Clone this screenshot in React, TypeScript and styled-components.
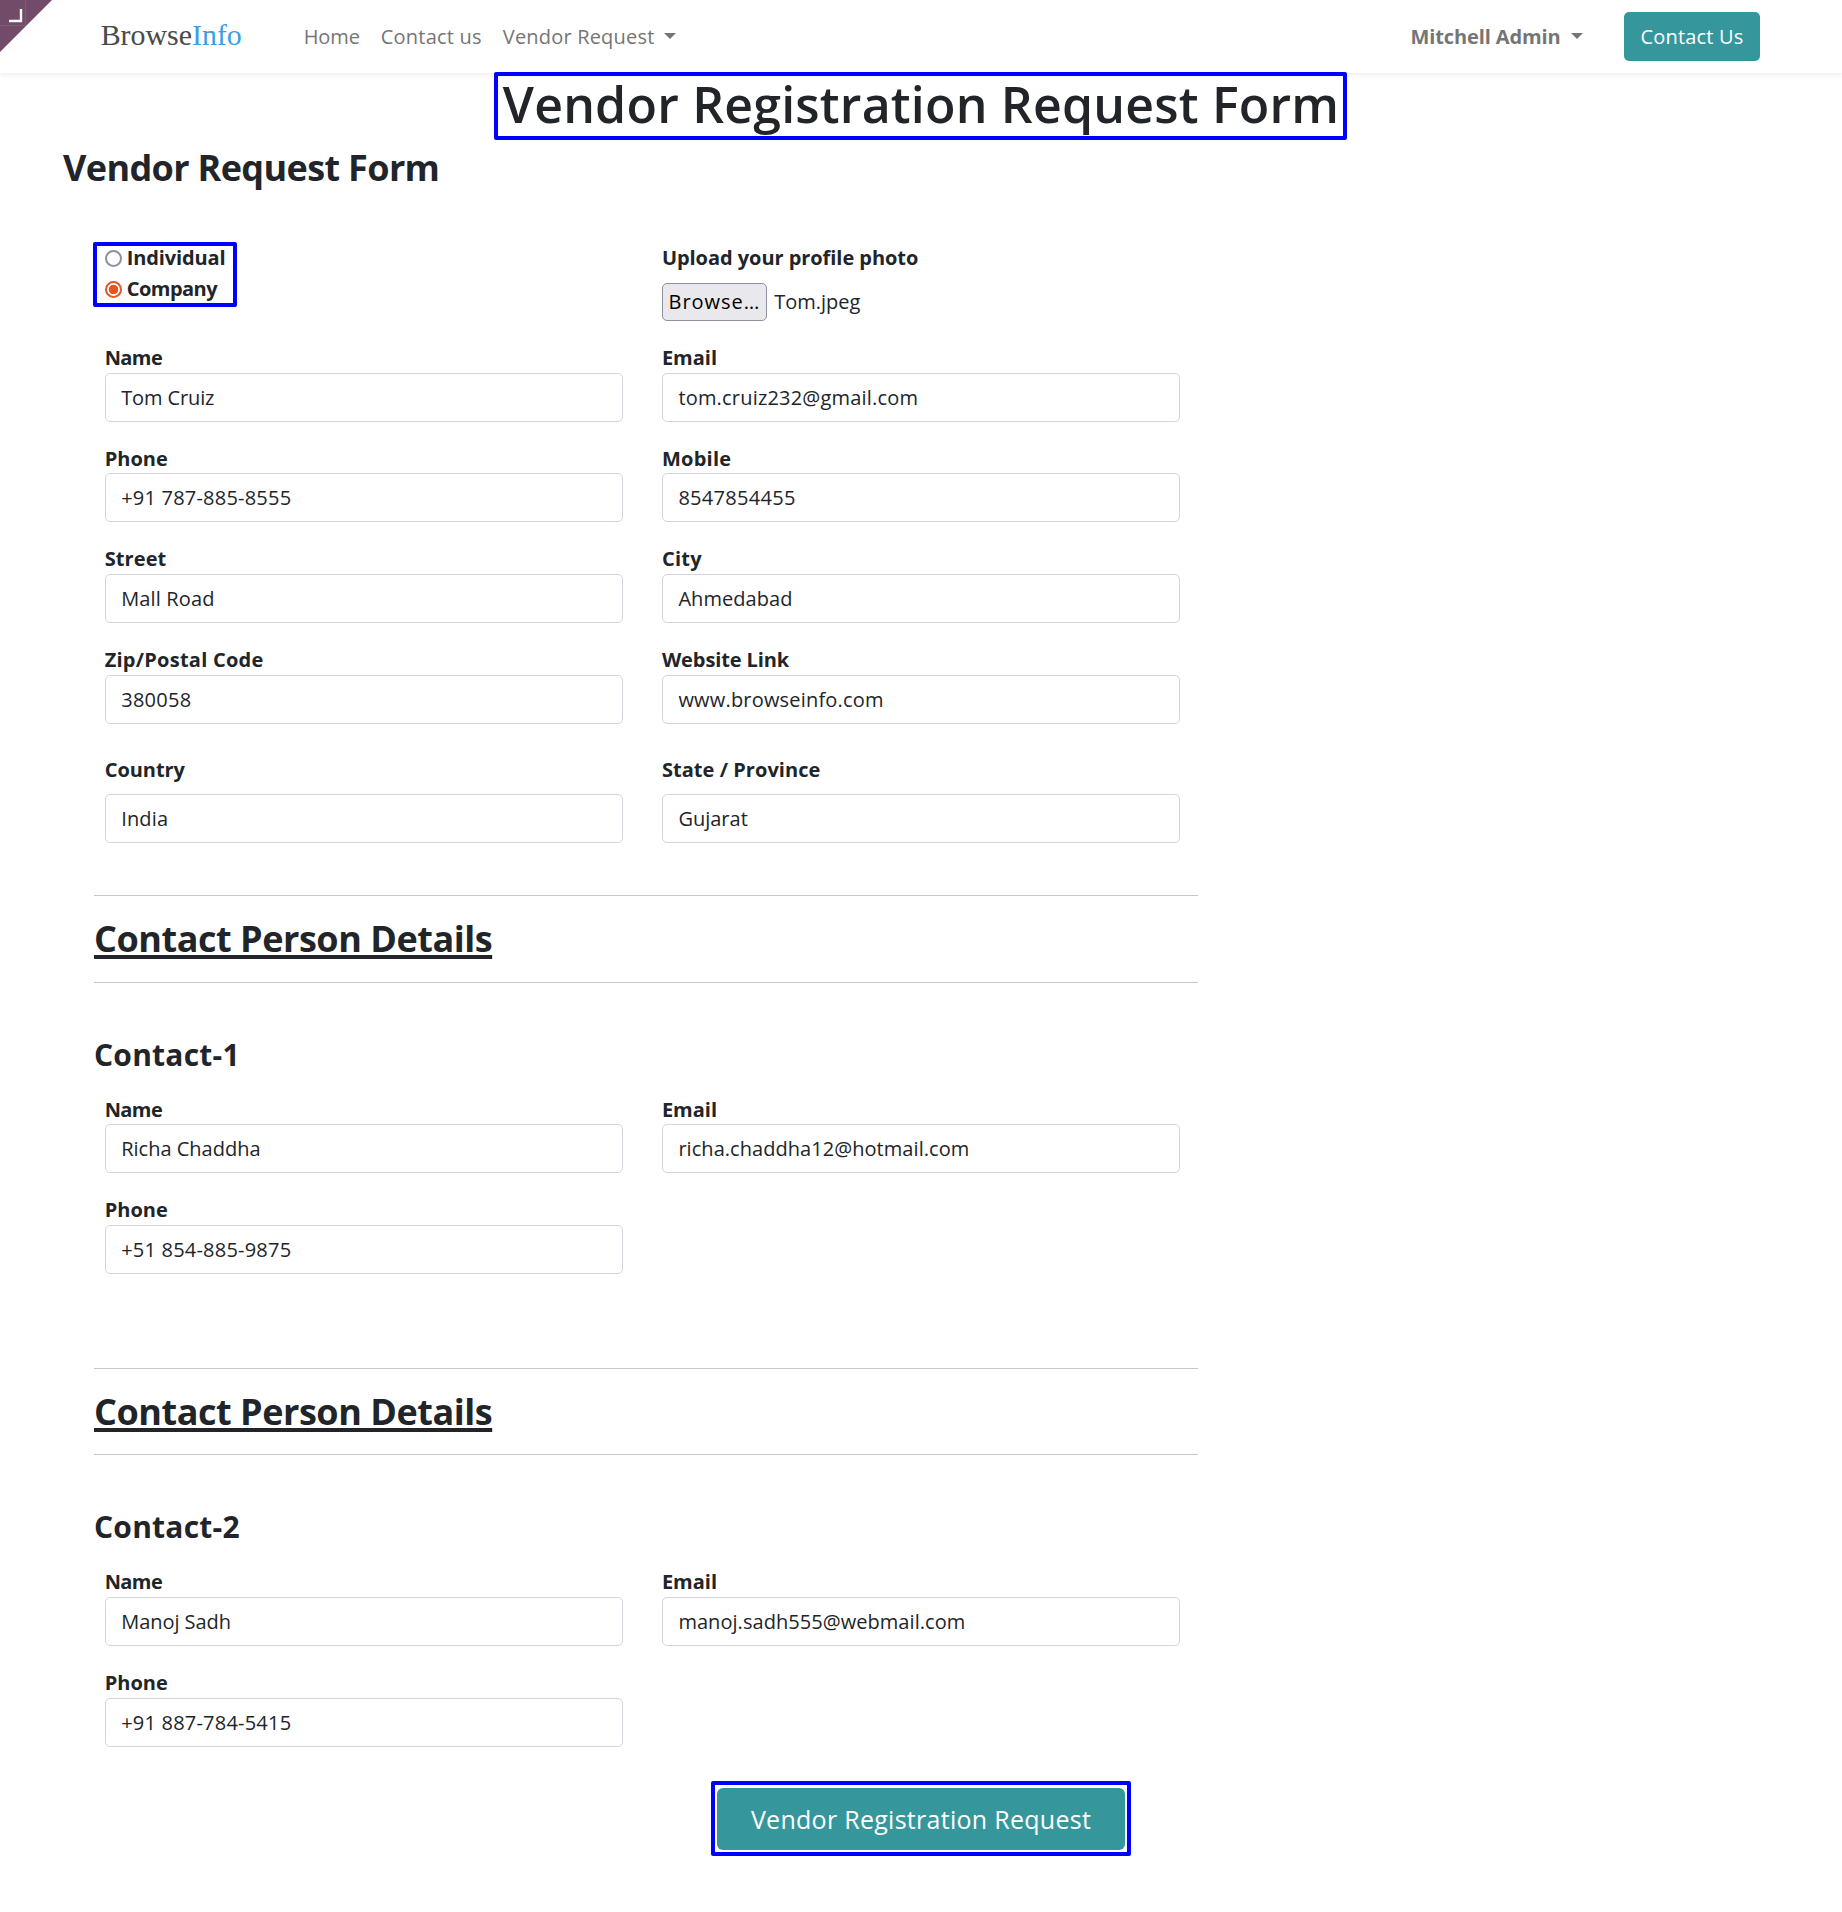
import React from "react";
import styled, { createGlobalStyle, css } from "styled-components";

const ink = "#212529";
const teal = "#35979c";
const markBlue = "#0000ff";

const GlobalStyle = createGlobalStyle`
  *, *::before, *::after { box-sizing: border-box; }
  body {
    margin: 0;
    background: #fff;
    color: ${ink};
    font-family: "Open Sans", "Noto Sans", sans-serif;
    font-size: 20px;
    line-height: 30.9px;
  }
  input, button { font: inherit; color: inherit; }
`;

interface TrackProps {
  $track?: number;
}

const tracking = css<TrackProps>`
  letter-spacing: ${({ $track = 0 }) => $track}px;
`;

const Page = styled.div`
  position: relative;
  width: 1842px;
  min-height: 1912px;
  background: #fff;
`;

/* ---------- header ---------- */

const Header = styled.header`
  display: flex;
  align-items: center;
  height: 73px;
  padding: 0 82px 0 100.7px;
  background: #fff;
  box-shadow: 0 2px 5px rgba(0, 0, 0, 0.075);
`;

const Corner = styled.svg`
  position: absolute;
  top: 0;
  left: 0;
  display: block;
`;

const Brand = styled.a`
  width: 203px;
  padding-bottom: 3px;
  font-family: "Liberation Serif", serif;
  font-size: 29.9px;
  line-height: 36px;
  color: #4a4a4a;
`;

const BrandAccent = styled.span`
  color: #3a9fe5;
`;

const Nav = styled.nav`
  display: flex;
  flex: 1;
  gap: 21px;
  padding-top: 1px;
`;

const NavLink = styled.a<TrackProps & { $strong?: boolean }>`
  display: flex;
  align-items: center;
  color: #757575;
  font-weight: ${({ $strong }) => ($strong ? 700 : 400)};
  white-space: nowrap;
  ${tracking}
`;

const Caret = styled.span`
  width: 12px;
  margin: 0 0 2px 10px;
  border: 6px solid transparent;
  border-top-color: #757575;
  border-bottom: 0;
`;

const UserMenu = styled.div`
  display: flex;
  padding: 1px 41.5px 0 0;
`;

const ContactButton = styled.button`
  width: 136px;
  height: 49px;
  padding: 1px 0 0;
  border: 0;
  border-radius: 5px;
  background: ${teal};
  color: #fff;
  letter-spacing: 0.19px;
`;

/* ---------- headings ---------- */

const PageTitle = styled.h1`
  position: relative;
  width: 852px;
  margin: 0 auto;
  text-align: center;
  font-size: 50px;
  font-weight: 560;
  line-height: 63px;
  letter-spacing: 0.2px;
  white-space: nowrap;
`;

const Mark = styled.span<{ $top: number; $left: number; $width: number; $height: number }>`
  position: absolute;
  top: ${({ $top }) => $top}px;
  left: ${({ $left }) => $left}px;
  width: ${({ $width }) => $width}px;
  height: ${({ $height }) => $height}px;
  border: 4px solid ${markBlue};
  border-radius: 2px;
  pointer-events: none;
`;

const FormTitle = styled.h2`
  margin: 10px 0 0 63px;
  font-size: 36px;
  font-weight: 700;
  line-height: 44px;
  letter-spacing: -0.64px;
`;

/* ---------- form ---------- */

const Form = styled.form`
  width: 1103.5px;
  margin: 51.8px 0 0 94px;
`;

const Columns = styled.div<{ $gapTop?: number }>`
  display: grid;
  grid-template-columns: 518.5px 518.5px;
  column-gap: 38.7px;
  row-gap: 20.85px;
  padding: ${({ $gapTop = 0 }) => $gapTop}px 0 0 10.7px;
`;

const TypeRow = styled(Columns)`
  height: 100.1px;
`;

const RadioGroup = styled.div`
  position: relative;
  justify-self: start;
`;

const RadioLabel = styled.label<TrackProps>`
  display: flex;
  align-items: center;
  height: 30.9px;
  padding-top: 2px;
  font-weight: 700;
  ${tracking}
`;

const Radio = styled.input`
  appearance: none;
  width: 17px;
  height: 17px;
  margin: 0 4.5px 0 0.5px;
  border: 2px solid #8f8f9d;
  border-radius: 50%;
  background: #fff;

  &:checked {
    border-color: #e95420;
    background: radial-gradient(circle, #e95420 0 4.4px, #fff 5.1px);
  }
`;

const Field = styled.label<{ $spaced?: boolean }>`
  display: flex;
  flex-direction: column;
  gap: ${({ $spaced }) => ($spaced ? 9.4 : 0)}px;
`;

const Label = styled.span<TrackProps>`
  display: block;
  height: 30.9px;
  font-weight: 700;
  line-height: 32.9px;
  ${tracking}
`;

const TextInput = styled.input<TrackProps>`
  width: 100%;
  height: 48.9px;
  padding: 0 15.5px;
  border: 1px solid #d1d6dc;
  border-radius: 5px;
  background: #fff;
  outline: 0;
  ${tracking}
`;

const FilePicker = styled.div`
  display: flex;
  align-items: center;
  margin-top: 10.2px;
`;

const BrowseButton = styled.button`
  width: 105px;
  height: 38px;
  padding: 1px 0 0;
  border: 1px solid #8f8f9d;
  border-radius: 5px;
  background: #e9e9ed;
  color: #000;
  letter-spacing: 0.95px;
  white-space: nowrap;
`;

const FileName = styled.span`
  margin-left: 7.3px;
  padding-top: 2px;
`;

const ContactsGap = styled.div`
  height: 52.2px;
`;

const ContactSection = styled.section<{ $after: number }>`
  padding-bottom: ${({ $after }) => $after}px;
`;

const SectionHeading = styled.h2`
  margin: 0;
  padding: 21.4px 0 20.2px;
  border: 1px solid #c6c7c8;
  border-width: 1px 0;
  font-size: 36px;
  font-weight: 700;
  line-height: 44px;
  letter-spacing: -0.46px;
  text-decoration: underline;
  text-decoration-thickness: 4px;
  text-underline-offset: 3px;
`;

const ContactName = styled.h3`
  margin: 53px 0 20.9px;
  font-size: 30px;
  font-weight: 700;
  line-height: 37px;
  letter-spacing: 0.22px;
`;

const SubmitRow = styled.div`
  display: flex;
  justify-content: center;
`;

const SubmitWrap = styled.div`
  position: relative;
`;

const SubmitButton = styled.button`
  display: block;
  width: 408px;
  height: 62px;
  padding: 1px 0 0;
  border: 0;
  border-radius: 6px;
  background: ${teal};
  color: #fff;
  font-size: 25px;
  line-height: 37px;
  letter-spacing: 0.28px;
`;

interface FieldData {
  label: string;
  value: string;
  labelTrack?: number;
  valueTrack?: number;
}

const details: FieldData[] = [
  { label: "Name", value: "Tom Cruiz", labelTrack: -0.59, valueTrack: -0.12 },
  { label: "Email", value: "tom.cruiz232@gmail.com", valueTrack: 0.19 },
  { label: "Phone", value: "+91 787-885-8555", valueTrack: 0.21 },
  { label: "Mobile", value: "8547854455", labelTrack: 0.26, valueTrack: 0.3 },
  { label: "Street", value: "Mall Road", labelTrack: 0.1, valueTrack: 0.15 },
  { label: "City", value: "Ahmedabad", labelTrack: 0.3, valueTrack: 0.05 },
  { label: "Zip/Postal Code", value: "380058", labelTrack: 0.25, valueTrack: 0.26 },
  { label: "Website Link", value: "www.browseinfo.com", labelTrack: -0.1, valueTrack: 0.19 },
];

const region: FieldData[] = [
  { label: "Country", value: "India", labelTrack: -0.05, valueTrack: 0.14 },
  { label: "State / Province", value: "Gujarat", labelTrack: 0.05 },
];

interface Contact {
  title: string;
  after: number;
  fields: FieldData[];
}

const contacts: Contact[] = [
  {
    title: "Contact-1",
    after: 93.7,
    fields: [
      { label: "Name", value: "Richa Chaddha", labelTrack: -0.59 },
      { label: "Email", value: "richa.chaddha12@hotmail.com", valueTrack: 0.05 },
      { label: "Phone", value: "+51 854-885-9875", valueTrack: 0.21 },
    ],
  },
  {
    title: "Contact-2",
    after: 41.1,
    fields: [
      { label: "Name", value: "Manoj Sadh", labelTrack: -0.59, valueTrack: -0.05 },
      { label: "Email", value: "manoj.sadh555@webmail.com", valueTrack: 0.05 },
      { label: "Phone", value: "+91 887-784-5415", valueTrack: 0.21 },
    ],
  },
];

function FormField({ data, spaced }: { data: FieldData; spaced?: boolean }) {
  return (
    <Field $spaced={spaced}>
      <Label $track={data.labelTrack}>{data.label}</Label>
      <TextInput defaultValue={data.value} $track={data.valueTrack} spellCheck={false} />
    </Field>
  );
}

export default function App() {
  return (
    <Page>
      <GlobalStyle />
      <Header>
        <Corner width="52" height="52" viewBox="0 0 52 52">
          <path d="M0 0H52L0 52Z" fill="#714b67" />
          <path d="M25.5 0V26M0 25.5H26" stroke="#805c76" strokeWidth="1" fill="none" />
          <path d="M21 9V21H9" stroke="#fff" strokeWidth="2.4" fill="none" />
        </Corner>
        <Brand>
          Browse<BrandAccent>Info</BrandAccent>
        </Brand>
        <Nav>
          <NavLink $track={-0.1}>Home</NavLink>
          <NavLink $track={0.21}>Contact us</NavLink>
          <NavLink $track={0.19}>
            Vendor Request
            <Caret />
          </NavLink>
        </Nav>
        <UserMenu>
          <NavLink $strong $track={-0.11}>
            Mitchell Admin
            <Caret />
          </NavLink>
        </UserMenu>
        <ContactButton type="button">Contact Us</ContactButton>
      </Header>

      <PageTitle>
        Vendor Registration Request Form
        <Mark $top={-1.5} $left={-1} $width={853} $height={68} />
      </PageTitle>
      <FormTitle>Vendor Request Form</FormTitle>

      <Form>
        <TypeRow>
          <RadioGroup>
            <RadioLabel $track={-0.12}>
              <Radio type="radio" name="kind" />
              Individual
            </RadioLabel>
            <RadioLabel $track={-0.52}>
              <Radio type="radio" name="kind" defaultChecked />
              Company
            </RadioLabel>
            <Mark $top={-0.3} $left={-11.7} $width={144} $height={65} />
          </RadioGroup>
          <div>
            <Label $track={-0.05}>Upload your profile photo</Label>
            <FilePicker>
              <BrowseButton type="button">Browse…</BrowseButton>
              <FileName>Tom.jpeg</FileName>
            </FilePicker>
          </div>
        </TypeRow>

        <Columns>
          {details.map((f) => (
            <FormField key={f.label} data={f} />
          ))}
        </Columns>
        <Columns $gapTop={30.2}>
          {region.map((f) => (
            <FormField key={f.label} data={f} spaced />
          ))}
        </Columns>

        <ContactsGap />
        {contacts.map((c) => (
          <ContactSection key={c.title} $after={c.after}>
            <SectionHeading>Contact Person Details</SectionHeading>
            <ContactName>{c.title}</ContactName>
            <Columns>
              {c.fields.map((f) => (
                <FormField key={f.label} data={f} />
              ))}
            </Columns>
          </ContactSection>
        ))}
      </Form>

      <SubmitRow>
        <SubmitWrap>
          <SubmitButton type="submit">Vendor Registration Request</SubmitButton>
          <Mark $top={-7} $left={-6.5} $width={420.5} $height={75} />
        </SubmitWrap>
      </SubmitRow>
    </Page>
  );
}
